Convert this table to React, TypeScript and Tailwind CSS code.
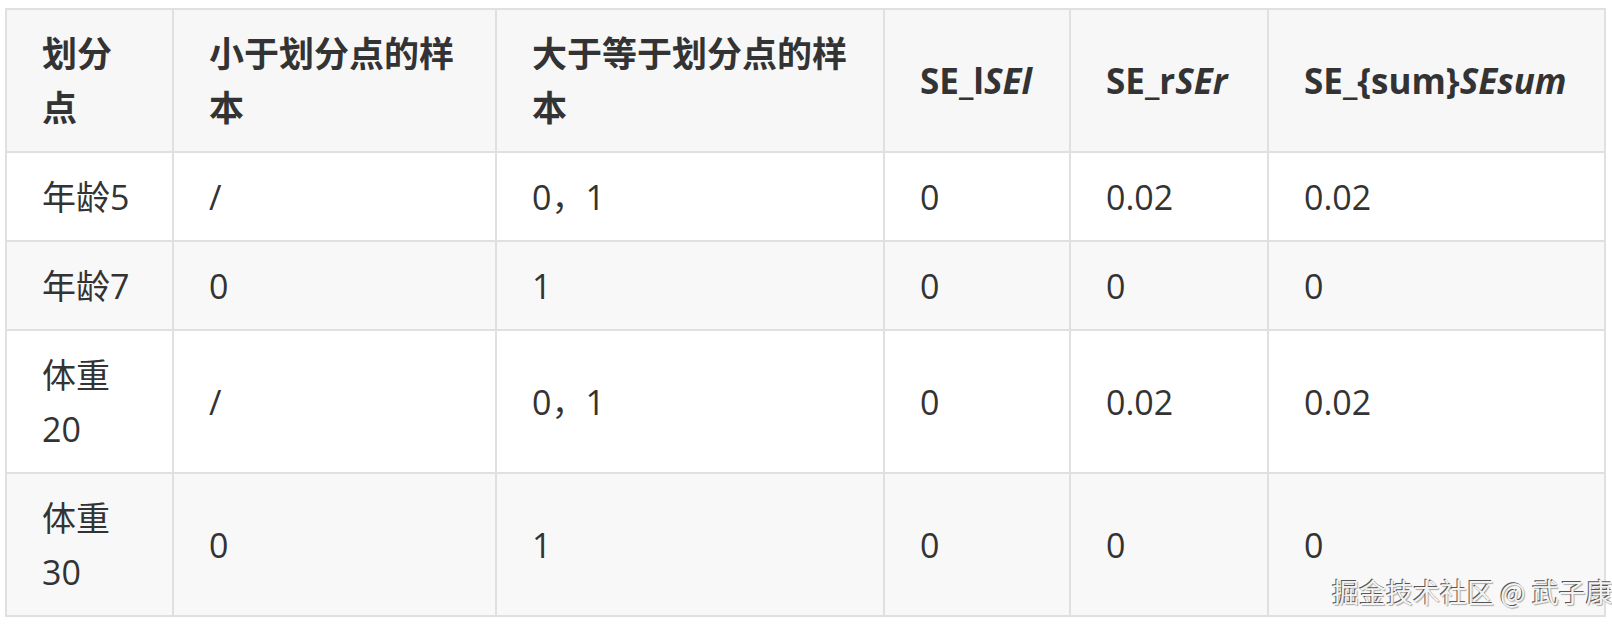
import React from "react";

const font = "font-['Open_Sans','Noto_Sans_CJK_SC',sans-serif]";

const rows: { cells: string[]; bg: string }[] = [
  { cells: ["年龄5", "/", "0，1", "0", "0.02", "0.02"], bg: "bg-white" },
  { cells: ["年龄7", "0", "1", "0", "0", "0"], bg: "bg-[#f8f8f8]" },
  { cells: ["体重20", "/", "0，1", "0", "0.02", "0.02"], bg: "bg-white" },
  { cells: ["体重30", "0", "1", "0", "0", "0"], bg: "bg-[#f8f8f8]" },
];

const td = "border-2 border-[#e0e0e0] px-[35px] py-[16.5px] align-middle";

export default function App() {
  return (
    <div className={`relative w-[1612px] h-[626px] overflow-hidden bg-white ${font} text-[#333333]`}>
      <div className="pl-[5px] pt-[8px]">
        <table className="table-fixed border-collapse w-[1599px] text-[34px] leading-[54px]">
          <colgroup>
            <col className="w-[167px]" />
            <col className="w-[323px]" />
            <col className="w-[388px]" />
            <col className="w-[186px]" />
            <col className="w-[198px]" />
            <col className="w-[337px]" />
          </colgroup>
          <thead>
            <tr className="bg-[#f7f7f7] font-bold text-left text-[35px]">
              <th className={td}>划分点</th>
              <th className={td}>小于划分点的样本</th>
              <th className={td}>大于等于划分点的样本</th>
              <th className={td}>
                SE_l<i>SEl</i>
              </th>
              <th className={td}>
                SE_r<i>SEr</i>
              </th>
              <th className={td}>
                SE_{"{sum}"}
                <i>SEsum</i>
              </th>
            </tr>
          </thead>
          <tbody>
            {rows.map((r, i) => (
              <tr key={i} className={r.bg}>
                {r.cells.map((c, j) => (
                  <td key={j} className={td}>
                    {c}
                  </td>
                ))}
              </tr>
            ))}
          </tbody>
        </table>
      </div>
      <div className="absolute left-[1332px] top-[575px] whitespace-nowrap text-[27px] leading-[34px] text-[#f3f3f3] font-['Noto_Sans_CJK_SC',sans-serif] [text-shadow:-1px_-1px_0_#555,1px_1px_1px_#aaa]">
        掘金技术社区 @ 武子康
      </div>
    </div>
  );
}
